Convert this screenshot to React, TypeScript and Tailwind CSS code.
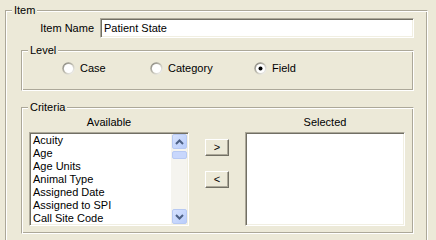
import React from 'react';

// Classic-style item editor dialog: item name, level radios, criteria picker

const availableItems = [
  'Acuity',
  'Age',
  'Age Units',
  'Animal Type',
  'Assigned Date',
  'Assigned to SPI',
  'Call Site Code',
];

const groupBox =
  'border border-t-[#aca899] border-l-[#aca899] border-r-white border-b-white shadow-[inset_1px_1px_0_#ffffff,inset_-1px_-1px_0_#aca899] m-0 p-0 min-w-0';
const groupLegend = 'ml-[6px] px-[2px] leading-[13px] bg-[#ece9d8]';
const sunken =
  'border border-t-[#aca899] border-l-[#aca899] border-r-white border-b-white shadow-[inset_1px_1px_0_#716f64,inset_-1px_-1px_0_#f1efe2] bg-white';

const Radio: React.FC<{ label: string; checked?: boolean; width: string }> = ({ label, checked, width }) => (
  <div className={`flex items-center gap-[5px] ${width}`}>
    <svg width="13" height="13" viewBox="0 0 13 13">
      <defs>
        <linearGradient id="radioRing" x1="0" y1="0" x2="1" y2="1">
          <stop offset="0" stopColor="#7c7a72" />
          <stop offset="0.55" stopColor="#c9c7bc" />
          <stop offset="1" stopColor="#ffffff" />
        </linearGradient>
      </defs>
      <circle cx="6.5" cy="6.5" r="6.2" fill="url(#radioRing)" />
      <circle cx="6.5" cy="6.5" r="4.6" fill="#ffffff" />
      {checked && <circle cx="6.5" cy="6.5" r="2" fill="#000000" />}
    </svg>
    <span className="leading-[13px]">{label}</span>
  </div>
);

const ScrollButton: React.FC<{ up?: boolean }> = ({ up }) => (
  <div className="h-[15px] w-[15px] flex items-center justify-center rounded-[2px] border border-[#b7c9f3] bg-[linear-gradient(135deg,#d6e2fe,#b9cdfb)]">
    <svg width="9" height="6" viewBox="0 0 9 6">
      <polyline
        points={up ? '1,5 4.5,1.5 8,5' : '1,1 4.5,4.5 8,1'}
        fill="none"
        stroke="#4d6185"
        strokeWidth="2"
      />
    </svg>
  </div>
);

const ListBox: React.FC<{ items?: string[]; scroll?: boolean }> = ({ items = [], scroll }) => (
  <div className={`${sunken} h-[94px] w-[160px] p-[1px] flex`}>
    <div className="flex-1 overflow-hidden pl-[2px]">
      {items.map((it) => (
        <div key={it} className="leading-[13px] whitespace-nowrap">
          {it}
        </div>
      ))}
    </div>
    {scroll && (
      <div className="w-[16px] flex flex-col bg-[#f5f4ef] pl-[1px]">
        <ScrollButton up />
        <div className="mt-[2px] h-[8px] w-[15px] rounded-[2px] border border-[#b7c9f3] bg-[#c8d7fc]" />
        <div className="flex-1" />
        <ScrollButton />
      </div>
    )}
  </div>
);

const PushButton: React.FC<{ label: string; className?: string }> = ({ label, className }) => (
  <button
    className={`h-[17px] w-[24px] flex items-center justify-center border border-t-white border-l-white border-r-[#716f64] border-b-[#716f64] shadow-[inset_-1px_-1px_0_#aca899] bg-[#ece9d8] leading-[13px] ${className ?? ''}`}
  >
    {label}
  </button>
);

export default function App() {
  return (
    <div className="w-[436px] h-[240px] overflow-hidden bg-[#ece9d8] text-[11px] text-black font-['Liberation_Sans',Arial,sans-serif]">
      <fieldset className={`${groupBox} ml-[5px] mt-[4px] w-[423px] h-[250px]`}>
        <legend className={groupLegend}>Item</legend>

        <div className="mt-[1px] flex items-center">
          <div className="w-[88px] text-right leading-[13px]">Item Name</div>
          <div className={`${sunken} ml-[6px] h-[20px] w-[314px] flex items-center pl-[3px] leading-[13px]`}>
            Patient State
          </div>
        </div>

        <fieldset className={`${groupBox} ml-[15px] mt-[6px] w-[393px] h-[47px]`}>
          <legend className={groupLegend}>Level</legend>
          <div className="mt-[5px] flex items-center pl-[40px]">
            <Radio label="Case" width="w-[88px]" />
            <Radio label="Category" width="w-[104px]" />
            <Radio label="Field" checked width="w-[80px]" />
          </div>
        </fieldset>

        <fieldset className={`${groupBox} ml-[15px] mt-[10px] w-[393px] h-[133px]`}>
          <legend className={groupLegend}>Criteria</legend>
          <div className="mt-[2px] flex pl-[7px]">
            <div className="flex flex-col w-[160px]">
              <div className="text-center leading-[13px]">Available</div>
              <div className="mt-[3px]">
                <ListBox items={availableItems} scroll />
              </div>
            </div>
            <div className="ml-[16px] mt-[23px] flex flex-col gap-[15px]">
              <PushButton label=">" />
              <PushButton label="<" />
            </div>
            <div className="ml-[16px] flex flex-col w-[160px]">
              <div className="text-center leading-[13px]">Selected</div>
              <div className="mt-[3px]">
                <ListBox />
              </div>
            </div>
          </div>
        </fieldset>
      </fieldset>
    </div>
  );
}
